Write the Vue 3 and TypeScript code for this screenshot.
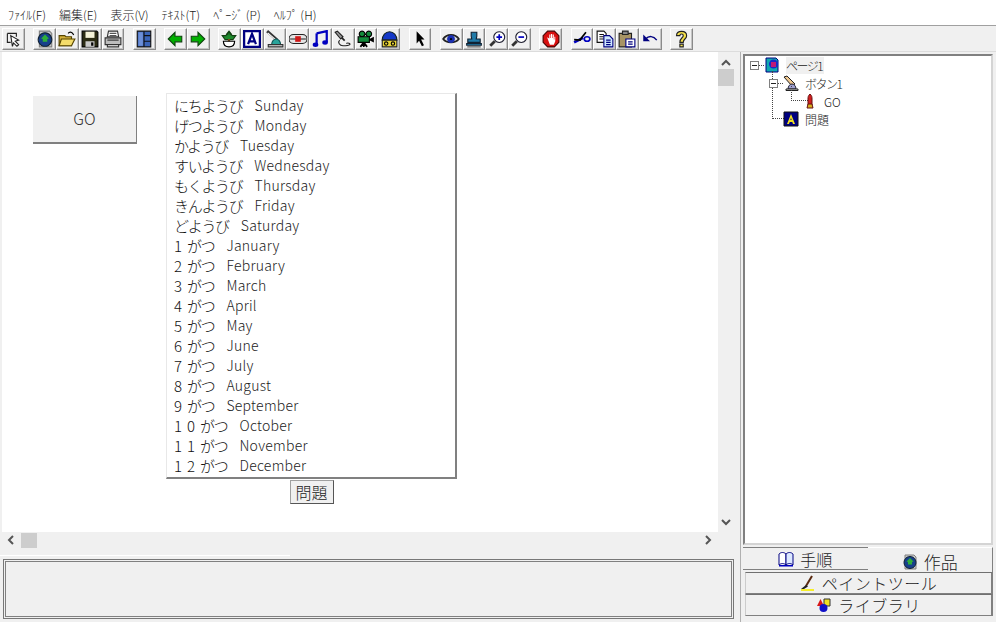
<script setup lang="ts">
type Shape = { d: string; fill?: string; stroke?: string; sw?: number }

const K = '#000'
const NAVY = '#000080'
const BLUE = '#0000c0'
const GREEN = '#00b000'
const YEL = '#f4e04a'
const GRAY = '#808080'

const icons: Record<string, Shape[]> = {
  frame: [
    { d: 'M3 3h8v3M3 3v8h3', fill: 'none', stroke: '#222' },
    { d: 'M6 5l7 4-3 1 3 3-1.500 1.500-3-3-1 3z', fill: '#fff', stroke: '#222' },
  ],
  globe: [
    { d: 'M3 1h9l2 2v12H3z', fill: '#c8c8c8', stroke: GRAY },
    { d: 'M8 2.500a6 6 0 1 0 .01 0z', fill: '#17408b', stroke: '#123' },
    { d: 'M8 4l3.500 3.500-1.500.5v2.500H6V8l-1.500-.5z', fill: '#2fae3a' },
  ],
  open: [
    { d: 'M1 5h5l1 1h5v8H1z', fill: '#d4b13a', stroke: '#554400' },
    { d: 'M3 8h12l-3 6H1z', fill: '#f4dc6a', stroke: '#554400' },
    { d: 'M9 3c1-1.500 3-1.500 4 0l1 1.500', fill: 'none', stroke: K },
  ],
  save: [
    { d: 'M1 1h13l1 1v13H1z', fill: '#2c2c14', stroke: K },
    { d: 'M4 1.500h8v5.500H4z', fill: '#f5f2d8' },
    { d: 'M4 10h8v5H4z', fill: '#c9c9c9' },
    { d: 'M9 11h2v3H9z', fill: K },
  ],
  print: [
    { d: 'M4 1h8l1 5H3z', fill: '#fff', stroke: '#333' },
    { d: 'M1 7h14v6H1z', fill: '#bdbdbd', stroke: '#333' },
    { d: 'M3 13h10v2H3z', fill: '#fff', stroke: '#333' },
    { d: 'M3 9h10', stroke: '#333', fill: 'none' },
    { d: 'M5 3h6M5 5h6', stroke: '#555', fill: 'none' },
  ],
  panels: [
    { d: 'M2 1h12v14H2z', fill: '#3a64b8', stroke: '#111' },
    { d: 'M8 1v14M8 5h6M8 10h6', stroke: '#111', fill: 'none' },
    { d: 'M3 2h4v12H3z', fill: '#6c8fd8' },
  ],
  left: [{ d: 'M2 8l6-6v3.500h6v5H8V14z', fill: GREEN, stroke: '#114411' }],
  right: [{ d: 'M14 8L8 2v3.500H2v5h6V14z', fill: GREEN, stroke: '#114411' }],
  plant: [
    { d: 'M8 1l2 2.500h-1l2 1.500h3L11.500 8.500h-7L2 5h3l2-1.500H6z', fill: '#1d8a2c', stroke: '#123f12' },
    { d: 'M7 8h2v3H7z', fill: '#7a4a12' },
    { d: 'M3 10h10c0 3-2 5-5 5s-5-2-5-5z', fill: '#fff', stroke: K },
  ],
  letter: [
    { d: 'M1 1h14v14H1z', fill: '#fff', stroke: NAVY, sw: 2 },
    { d: 'M4.500 12.500L8 3.500l3.500 9M5.800 10h4.400', fill: 'none', stroke: NAVY, sw: 2 },
  ],
  press: [
    { d: 'M1 1l9 8', fill: 'none', stroke: '#333', sw: 2.500 },
    { d: 'M1.500 2.500l8 7', fill: 'none', stroke: '#fff', sw: 1 },
    { d: 'M5 13c0-3 2-5 4-5s4 2 4 5z', fill: '#2aa39a', stroke: '#155' },
    { d: 'M2 13h13v2H2z', fill: '#e0e0e0', stroke: '#333' },
  ],
  capsule: [
    { d: 'M4 4h8a4 4 0 0 1 0 8H4a4 4 0 0 1 0-8z', fill: '#e4e4e4', stroke: '#222' },
    { d: 'M1 8h14', stroke: '#333', fill: 'none' },
    { d: 'M5.500 5.500h5v5h-5z', fill: '#d01818' },
  ],
  music: [
    { d: 'M5 3l9-2v10', fill: 'none', stroke: BLUE, sw: 2 },
    { d: 'M5 3v10', fill: 'none', stroke: BLUE, sw: 2 },
    { d: 'M1.500 13a2.500 2 0 1 0 5 0a2.500 2 0 1 0-5 0zM10 11a2.500 2 0 1 0 5 0a2.500 2 0 1 0-5 0z', fill: BLUE },
  ],
  mic: [
    { d: 'M1 2l2-1 5 5-2 2z', fill: '#999', stroke: '#222' },
    { d: 'M7 7l2.500 2.500', stroke: '#222', fill: 'none', sw: 1.500 },
    { d: 'M5 9c-2 2 0 5 3 5s5 0 6-1-2-2-3-1', fill: 'none', stroke: '#222' },
  ],
  camera: [
    { d: 'M4.500 1a2.500 2.500 0 1 0 .01 0zM10.500 1a2.500 2.500 0 1 0 .01 0z', fill: '#128a3a', stroke: K },
    { d: 'M1 6h10v5H1z', fill: '#128a3a', stroke: K },
    { d: 'M11 8l4-2v5l-4-2z', fill: K },
    { d: 'M6 11l-3 4M6 11l3 4M6 11v4', stroke: K, fill: 'none', sw: 1.500 },
  ],
  tape: [
    { d: 'M2 9a6.500 7.500 0 0 1 13 0z', fill: '#1438c8', stroke: '#122' },
    { d: 'M2 9h13v6H2z', fill: '#e9d437', stroke: '#222' },
    { d: 'M4 12a1.500 1.500 0 1 0 3 0a1.500 1.500 0 1 0-3 0zM10 12a1.500 1.500 0 1 0 3 0a1.500 1.500 0 1 0-3 0z', fill: '#e9d437', stroke: K },
  ],
  pointer: [{ d: 'M5 1l7 7.500H9l2.500 5-1.800 1-2.500-5L5 12z', fill: K }],
  eye: [
    { d: 'M1 8c3-5 11-5 14 0-3 4-11 4-14 0z', fill: '#ddd', stroke: '#222', sw: 1.500 },
    { d: 'M8 4.500a3.500 3.500 0 1 0 .01 0z', fill: '#1a2fb0' },
    { d: 'M8 7a1 1 0 1 0 .01 0z', fill: K },
  ],
  stamp: [
    { d: 'M5.500 2h5v3.500L10 8h3.500v3h-11V8H6l-.5-2.500z', fill: '#1f7aa8', stroke: '#123' },
    { d: 'M1.500 12h13v1.500h-13z', fill: '#1f7aa8', stroke: '#123' },
    { d: 'M2 15h12', stroke: '#555', fill: 'none', sw: 1 },
  ],
  zoomin: [
    { d: 'M2 14l4-4', stroke: '#333', fill: 'none', sw: 2.500 },
    { d: 'M10 1.500a4.800 4.800 0 1 0 .01 0z', fill: '#fff', stroke: '#223' },
    { d: 'M7.500 6.300h5M10 3.800v5', stroke: BLUE, fill: 'none', sw: 1.500 },
  ],
  zoomout: [
    { d: 'M2 14l4-4', stroke: '#333', fill: 'none', sw: 2.500 },
    { d: 'M10 1.500a4.800 4.800 0 1 0 .01 0z', fill: '#fff', stroke: '#223' },
    { d: 'M7.500 6.300h5', stroke: BLUE, fill: 'none', sw: 1.500 },
  ],
  stop: [
    { d: 'M5 1h6l4 4v6l-4 4H5l-4-4V5z', fill: '#d81010', stroke: '#400' },
    { d: 'M4.500 6.500l2 1V4h1v3h.5V3.500h1V7h.5V4h1v4.500h.500V6h.800v4l-1.300 3H7z', fill: '#fff' },
  ],
  cut: [
    { d: 'M1 11l8-4', stroke: BLUE, fill: 'none', sw: 2.200 },
    { d: 'M6 9l5.500-7M1 8.500l6 .5', stroke: K, fill: 'none', sw: 1.500 },
    { d: 'M10 8a2.500 2 0 1 0 5 0a2.500 2 0 1 0-5 0z', fill: 'none', stroke: BLUE, sw: 1.500 },
  ],
  copy: [
    { d: 'M1 1h6l2 2v8H1z', fill: '#fff', stroke: '#111' },
    { d: 'M3 4h4M3 6h4M3 8h4', stroke: '#111', fill: 'none' },
    { d: 'M7 5h5l3 3v7H7z', fill: '#cfe8ff', stroke: NAVY },
    { d: 'M9 9h4M9 11h4M9 13h4', stroke: NAVY, fill: 'none' },
  ],
  paste: [
    { d: 'M1 3h11v12H1z', fill: '#a89464', stroke: '#222' },
    { d: 'M4 1h5v3H4z', fill: '#888', stroke: '#222' },
    { d: 'M7 8h8v7H7z', fill: '#fff', stroke: NAVY },
    { d: 'M9 10.500h4M9 12.500h4', stroke: NAVY, fill: 'none' },
  ],
  undo: [
    { d: 'M4 8c3-3 7-3 10 1', fill: 'none', stroke: NAVY, sw: 1.300 },
    { d: 'M2 4v6h6z', fill: NAVY },
  ],
  help: [
    { d: 'M4 5c0-5 9-5 9 0 0 3-3 3-3 6H7c0-4 3-4 3-6 0-2-3-2-3 0z', fill: YEL, stroke: '#222' },
    { d: 'M7 12.500h3V15H7z', fill: YEL, stroke: '#222' },
  ],
  rocket: [
    { d: 'M8 1c2 2 2 3 2 5v6H6V6c0-2 0-3 2-5z', fill: '#d02020', stroke: '#611' },
    { d: 'M5 15l1-4h4l1 4z', fill: '#d8b020', stroke: '#611' },
  ],
  page: [
    { d: 'M2 1h10l2 2v12H2z', fill: '#10a8b0', stroke: NAVY },
    { d: 'M5 7a4.500 4.500 0 1 0 9 0a4.500 4.500 0 1 0-9 0z', fill: '#1828c8' },
    { d: 'M7 5h5v5H7z', fill: '#c01878' },
  ],
  hand: [
    { d: 'M1 2l3-1 8 8-3 2z', fill: '#f0c890', stroke: '#222' },
    { d: 'M5 14c0-3 2-5 4-5s4 2 4 5z', fill: '#a0a0d0', stroke: '#223' },
    { d: 'M3 14h12v1.500H3z', fill: '#ddd', stroke: '#222' },
  ],
  labelA: [
    { d: 'M1 1h14v14H1z', fill: NAVY, stroke: '#111' },
    { d: 'M4 13L8 3l4 10h-2l-.700-2H6.700L6 13zM7.300 9h1.400L8 7z', fill: '#f0e020' },
  ],
  book: [
    { d: 'M1 3c2-2 5-2 7 0v11c-2-2-5-2-7 0z', fill: '#fff', stroke: NAVY },
    { d: 'M8 3c2-2 5-2 7 0v11c-2-2-5-2-7 0z', fill: '#dce8ff', stroke: NAVY },
    { d: 'M1 14h14v1.500H1z', fill: BLUE },
  ],
  brush: [
    { d: 'M12 1L6 11', stroke: '#5a2a10', fill: 'none', sw: 2 },
    { d: 'M6 10l2 1.500L4 14H1z', fill: '#222' },
    { d: 'M1 14h13v2H1z', fill: '#f6ef2a' },
  ],
  shapes: [
    { d: 'M1 9l3.500-7L8 9z', fill: '#d81818' },
    { d: 'M8 2h6v7H8z', fill: '#f0e020', stroke: '#333' },
    { d: 'M3.500 11a4 4 0 1 0 8 0a4 4 0 1 0-8 0z', fill: '#1010c8' },
  ],
}

const toolGroups: string[][] = [
  ['frame'],
  ['globe', 'open', 'save', 'print'],
  ['panels'],
  ['left', 'right'],
  ['plant', 'letter', 'press', 'capsule', 'music', 'mic', 'camera', 'tape'],
  ['pointer'],
  ['eye', 'stamp', 'zoomin', 'zoomout'],
  ['stop'],
  ['cut', 'copy', 'paste', 'undo'],
  ['help'],
]

const menus = ['ﾌｧｲﾙ(F)', '編集(E)', '表示(V)', 'ﾃｷｽﾄ(T)', 'ﾍﾟｰｼﾞ (P)', 'ﾍﾙﾌﾟ (H)']

const rows = [
  { num: '', kana: 'にちようび', en: 'Sunday' },
  { num: '', kana: 'げつようび', en: 'Monday' },
  { num: '', kana: 'かようび', en: 'Tuesday' },
  { num: '', kana: 'すいようび', en: 'Wednesday' },
  { num: '', kana: 'もくようび', en: 'Thursday' },
  { num: '', kana: 'きんようび', en: 'Friday' },
  { num: '', kana: 'どようび', en: 'Saturday' },
  { num: '1', kana: 'がつ', en: 'January' },
  { num: '2', kana: 'がつ', en: 'February' },
  { num: '3', kana: 'がつ', en: 'March' },
  { num: '4', kana: 'がつ', en: 'April' },
  { num: '5', kana: 'がつ', en: 'May' },
  { num: '6', kana: 'がつ', en: 'June' },
  { num: '7', kana: 'がつ', en: 'July' },
  { num: '8', kana: 'がつ', en: 'August' },
  { num: '9', kana: 'がつ', en: 'September' },
  { num: '10', kana: 'がつ', en: 'October' },
  { num: '11', kana: 'がつ', en: 'November' },
  { num: '12', kana: 'がつ', en: 'December' },
]

const tree = [
  { depth: 0, icon: 'page', label: 'ページ1', toggle: true, narrow: true, selected: true },
  { depth: 1, icon: 'hand', label: 'ボタン1', toggle: true, narrow: true, selected: false },
  { depth: 2, icon: 'rocket', label: 'GO', toggle: false, narrow: false, selected: false },
  { depth: 1, icon: 'labelA', label: '問題', toggle: false, narrow: false, selected: false },
]
</script>

<template>
  <div class="window">
    <nav class="menu">
      <span v-for="m in menus" :key="m" class="menu-item">{{ m }}</span>
    </nav>

    <div class="toolbar">
      <div v-for="(group, g) in toolGroups" :key="g" class="tool-group">
        <button v-for="id in group" :key="id" class="tool" type="button">
          <svg width="18" height="18" viewBox="0 0 16 16">
            <path
              v-for="(s, i) in icons[id]"
              :key="i"
              :d="s.d"
              :fill="s.fill"
              :stroke="s.stroke"
              :stroke-width="s.sw ?? 1"
            />
          </svg>
        </button>
      </div>
    </div>

    <div class="body">
      <section class="left">
        <div class="canvas-row">
          <div class="canvas">
            <button class="go" type="button">GO</button>
            <div class="sheet">
              <div class="listbox">
                <div v-for="r in rows" :key="r.en" class="row">
                  <span class="jp"><span v-if="r.num" class="num">{{ r.num }}</span>{{ r.kana }}</span>
                  <span class="en">{{ r.en }}</span>
                </div>
              </div>
              <button class="mondai" type="button">問題</button>
            </div>
          </div>
          <div class="vscroll">
            <svg width="10" height="7" viewBox="0 0 10 7"><path d="M1 6l4-4 4 4" fill="none" stroke="#555" stroke-width="2" /></svg>
            <div class="vthumb"></div>
            <div class="grow"></div>
            <svg width="10" height="7" viewBox="0 0 10 7"><path d="M1 1l4 4 4-4" fill="none" stroke="#555" stroke-width="2" /></svg>
          </div>
        </div>
        <div class="hscroll">
          <svg width="7" height="10" viewBox="0 0 7 10"><path d="M6 1L2 5l4 4" fill="none" stroke="#555" stroke-width="2" /></svg>
          <div class="hthumb"></div>
          <div class="grow"></div>
          <svg width="7" height="10" viewBox="0 0 7 10"><path d="M1 1l4 4-4 4" fill="none" stroke="#555" stroke-width="2" /></svg>
        </div>
        <div class="splitter"></div>
        <div class="status-wrap">
          <div class="status"></div>
        </div>
      </section>

      <aside class="right">
        <div class="tree">
          <div v-for="n in tree" :key="n.label" class="node" :class="`depth-${n.depth}`">
            <span v-if="n.toggle" class="toggle"></span>
            <span v-else class="branch"></span>
            <svg class="node-icon" width="16" height="16" viewBox="0 0 16 16">
              <path
                v-for="(s, i) in icons[n.icon]"
                :key="i"
                :d="s.d"
                :fill="s.fill"
                :stroke="s.stroke"
                :stroke-width="s.sw ?? 1"
              />
            </svg>
            <span class="node-label" :class="{ selected: n.selected, narrow: n.narrow }">{{ n.label }}</span>
          </div>
        </div>

        <div class="tabs">
          <div class="tab">
            <svg width="16" height="16" viewBox="0 0 16 16">
              <path v-for="(s, i) in icons.book" :key="i" :d="s.d" :fill="s.fill" :stroke="s.stroke" />
            </svg>
            手順
          </div>
          <div class="tab active">
            <svg width="16" height="16" viewBox="0 0 16 16">
              <path v-for="(s, i) in icons.globe" :key="i" :d="s.d" :fill="s.fill" :stroke="s.stroke" />
            </svg>
            作品
          </div>
        </div>
        <div class="bar">
          <svg width="16" height="16" viewBox="0 0 16 16">
            <path v-for="(s, i) in icons.brush" :key="i" :d="s.d" :fill="s.fill" :stroke="s.stroke" :stroke-width="s.sw ?? 1" />
          </svg>
          ペイントツール
        </div>
        <div class="bar">
          <svg width="16" height="16" viewBox="0 0 16 16">
            <path v-for="(s, i) in icons.shapes" :key="i" :d="s.d" :fill="s.fill" :stroke="s.stroke" />
          </svg>
          ライブラリ
        </div>
      </aside>
    </div>
  </div>
</template>

<style scoped>
.window {
  width: 996px;
  height: 622px;
  display: flex;
  flex-direction: column;
  overflow: hidden;
  background: #f0f0f0;
  color: #222;
  font-family: "Noto Sans CJK JP", "Liberation Sans", sans-serif;
}

.menu {
  height: 26px;
  box-sizing: border-box;
  flex: none;
  display: flex;
  align-items: center;
  gap: 13px;
  padding: 3px 0 0 8px;
  background: #fff;
  border-bottom: 1px solid #a0a0a0;
  font-size: 12px;
  font-weight: 300;
  color: #222;
}

.toolbar {
  height: 26px;
  box-sizing: border-box;
  flex: none;
  display: flex;
  align-items: center;
  gap: 8.5px;
  padding: 1px 0 0 2px;
  border-bottom: 1px solid #dcdcdc;
}

.tool-group {
  display: flex;
}

.tool {
  width: 22.75px;
  height: 22px;
  padding: 0;
  display: flex;
  align-items: center;
  justify-content: center;
  background: #f0f0f0;
  border: 1px solid;
  border-color: #fff #8a8a8a #8a8a8a #fff;
  box-shadow: inset -1px -1px 0 #c4c4c4;
}

.body {
  flex: 1;
  min-height: 0;
  display: flex;
}

.left {
  width: 741px;
  flex: none;
  display: flex;
  flex-direction: column;
  border-right: 1px solid #b0b0b0;
  box-sizing: border-box;
}

.canvas-row {
  height: 480px;
  flex: none;
  display: flex;
}

.canvas {
  flex: 1;
  margin-left: 2px;
  display: flex;
  align-items: flex-start;
  gap: 29px;
  padding: 41px 0 0 31px;
  background: #fff;
}

.go {
  width: 104px;
  height: 48px;
  margin-top: 3px;
  padding: 0 0 3px;
  background: #f0f0f0;
  border: 0;
  border-right: 1px solid #808080;
  border-bottom: 2px solid #808080;
  font-family: inherit;
  font-size: 16px;
  font-weight: 300;
  color: #333;
}

.sheet {
  display: flex;
  flex-direction: column;
  align-items: center;
}

.listbox {
  width: 291px;
  height: 386px;
  box-sizing: border-box;
  padding: 1px 0 0 7px;
  background: #fff;
  border: 1px solid #e8e8e8;
  border-right: 2px solid #808080;
  border-bottom: 2px solid #808080;
}

.row {
  height: 20px;
  display: flex;
  align-items: center;
  gap: 12px;
  white-space: nowrap;
}

.jp {
  font-size: 15px;
  font-weight: 300;
  letter-spacing: -1.3px;
  color: #111;
}

.num {
  letter-spacing: 5px;
}

.en {
  font-size: 14px;
  font-weight: 300;
  letter-spacing: 0.25px;
  color: #222;
}

.mondai {
  width: 44px;
  height: 24px;
  margin-top: 1px;
  padding: 0;
  background: #f0f0f0;
  border: 1px solid;
  border-color: #a0a0a0 #555 #555 #a0a0a0;
  font-family: inherit;
  font-size: 16px;
  font-weight: 300;
  line-height: 20px;
  color: #222;
}

.vscroll {
  width: 22px;
  flex: none;
  display: flex;
  flex-direction: column;
  align-items: center;
  box-sizing: border-box;
  padding: 7px 6px 6px 0;
}

.vthumb {
  width: 16px;
  height: 17px;
  margin-top: 3px;
  background: #cdcdcd;
}

.grow {
  flex: 1;
}

.hscroll {
  height: 16px;
  flex: none;
  display: flex;
  align-items: center;
  padding: 0 28px 0 7px;
}

.hthumb {
  width: 16px;
  height: 15px;
  margin-left: 7px;
  background: #cdcdcd;
}

.splitter {
  width: 290px;
  height: 1px;
  flex: none;
  margin-top: 7px;
  background: #fff;
}

.status-wrap {
  flex: 1;
  padding: 3px 6px 3px 3px;
  display: flex;
}

.status {
  flex: 1;
  border: 1px solid #808080;
  outline: 1px solid #777;
  outline-offset: 1px;
  margin: 2px;
}

.right {
  flex: 1;
  display: flex;
  flex-direction: column;
  padding: 2px 3px 5px 2px;
}

.tree {
  height: 491px;
  flex: none;
  box-sizing: border-box;
  padding: 0 0 0 5px;
  background: #fff;
  border: 2px solid #808080;
  border-right-color: #d4d4d4;
  border-bottom-color: #d4d4d4;
  font-size: 12px;
  font-weight: 300;
}

.node {
  position: relative;
  height: 18px;
  display: flex;
  align-items: center;
  gap: 2px;
}

.depth-1 {
  padding-left: 19px;
}

.depth-2 {
  padding-left: 38px;
}

.toggle {
  position: relative;
  z-index: 1;
  width: 9px;
  height: 9px;
  margin-right: 3px;
  box-sizing: border-box;
  flex: none;
  background: #fff;
  border: 1px solid #808080;
}

.toggle::after {
  content: "";
  position: absolute;
  left: 1px;
  top: 3px;
  width: 5px;
  height: 1px;
  background: #222;
}

.toggle::before {
  content: "";
  position: absolute;
  left: 8px;
  top: 3px;
  width: 5px;
  border-top: 1px dotted #444;
}

.branch {
  width: 12px;
  flex: none;
}

.branch::before {
  content: "";
  position: absolute;
  bottom: 50%;
  border-left: 1px dotted #444;
  border-bottom: 1px dotted #444;
}

.depth-1 .branch::before {
  left: 22px;
  width: 11px;
  height: 47px;
}

.depth-2 .branch::before {
  left: 41px;
  width: 16px;
  height: 14px;
}

.node-icon {
  position: relative;
  flex: none;
}

.node-label {
  margin-left: 4px;
  padding: 0 2px 0 0;
  color: #222;
}

.node-label.narrow {
  letter-spacing: -1.5px;
}

.node-label.selected {
  background: #f0f0f0;
}

.tabs {
  display: flex;
  margin-top: 2px;
  height: 25px;
  flex: none;
}

.tab {
  flex: 1;
  display: flex;
  align-items: center;
  justify-content: center;
  gap: 6px;
  font-size: 16px;
  font-weight: 300;
  border-top: 1px solid #808080;
  border-bottom: 1px solid #808080;
  height: 23px;
  box-sizing: border-box;
}

.tab.active {
  height: 25px;
  padding-top: 3px;
  border-top: 1px solid #fff;
  border-bottom: 0;
  border-right: 1px solid #808080;
  font-size: 17px;
}

.bar {
  height: 22px;
  flex: none;
  box-sizing: border-box;
  margin-left: 2px;
  display: flex;
  align-items: center;
  justify-content: center;
  gap: 6px;
  font-size: 16px;
  font-weight: 300;
  letter-spacing: 0.5px;
  border: 1px solid;
  border-color: #707070 #808080 #808080 #ccc;
  border-right-width: 2px;
}
</style>

<style>
html,
body {
  margin: 0;
  background: #f0f0f0;
}
</style>
